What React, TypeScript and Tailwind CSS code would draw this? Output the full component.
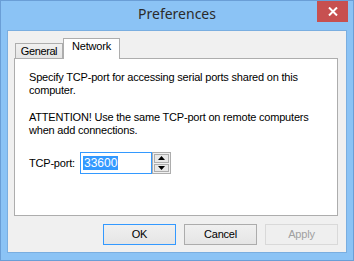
import React from 'react';

const body = { fontFamily: '"Liberation Sans", Arial, sans-serif' };

function Spinner() {
  return (
    <div className="flex flex-col gap-[1px] w-[19px] h-[22px] border border-[#adadad] bg-[#f0f0f0] p-[1px]">
      <div className="flex-1 flex items-center justify-center border border-[#adadad] bg-[#e8e8e8]">
        <svg width="7" height="4" viewBox="0 0 7 4"><path d="M0 4 L3.5 0 L7 4 Z" fill="#000" /></svg>
      </div>
      <div className="flex-1 flex items-center justify-center border border-[#adadad] bg-[#e8e8e8]">
        <svg width="7" height="4" viewBox="0 0 7 4"><path d="M0 0 L7 0 L3.5 4 Z" fill="#000" /></svg>
      </div>
    </div>
  );
}

export default function App() {
  return (
    <div className="w-[354px] h-[261px] flex flex-col border border-[#6a9ed6] bg-[#8bc3f5]" style={body}>
      {/* Title bar */}
      <div className="h-[29px] flex items-start justify-center relative">
        <span className="mt-[4px] text-[14px] leading-[18px] text-[#2b2b2b]" style={{ fontFamily: '"Noto Sans", "Open Sans", sans-serif' }}>Preferences</span>
        <button className="absolute right-[5px] top-0 w-[31px] h-[21px] bg-[#c75050] flex items-center justify-center">
          <svg width="10" height="9" viewBox="0 0 10 9"><path d="M1 0.5 L9 8.5 M9 0.5 L1 8.5" stroke="#fff" strokeWidth="2" /></svg>
        </button>
      </div>

      {/* Client area */}
      <div className="mx-[6px] h-[223px] border border-[#7aaee0] bg-[#f0f0f0] flex flex-col pt-[7px] pl-[6px] pr-[8px] pb-[7px] text-[11px] tracking-[-0.2px] text-black">
        {/* Tabs */}
        <div className="h-[20px] flex items-end pl-[1px]">
          <div className="h-[15px] w-[48px] border border-b-0 border-[#adadad] bg-gradient-to-b from-[#f0f0f0] to-[#e5e5e5] flex items-center justify-center pt-[1px] leading-none tracking-[-0.4px]">
            General
          </div>
          <div className="relative z-10 -mb-px h-[21px] w-[57px] border border-b-0 border-[#adadad] bg-white flex items-start justify-center pt-[2px] leading-none">
            Network
          </div>
        </div>

        {/* Panel */}
        <div className="h-[158px] border border-[#adadad] bg-white pl-[14px] pt-[12px] leading-[13px]">
          <p>Specify TCP-port for accessing serial ports shared on this<br />computer.</p>
          <p className="mt-[14px]">ATTENTION! Use the same TCP-port on remote computers<br />when add connections.</p>
          <div className="mt-[15px] flex items-center">
            <span className="w-[51px]">TCP-port:</span>
            <div className="flex">
              <div className="w-[72px] h-[22px] border border-[#3399ff] bg-white flex items-center pl-[2px]">
                <span className="bg-[#3399ff] text-white text-[12px] leading-[14px] px-px tracking-normal">33600</span>
              </div>
              <Spinner />
            </div>
          </div>
        </div>

        {/* Buttons */}
        <div className="mt-[8px] flex justify-end gap-[8px]">
          <button className="w-[73px] h-[21px] border border-[#3399ff] bg-gradient-to-b from-[#f0f0f0] to-[#e5e5e5] text-[11px]">OK</button>
          <button className="w-[73px] h-[21px] border border-[#acacac] bg-gradient-to-b from-[#f0f0f0] to-[#e5e5e5] text-[11px]">Cancel</button>
          <button className="w-[73px] h-[21px] border border-[#d9d9d9] bg-[#efefef] text-[11px] text-[#a0a0a0]">Apply</button>
        </div>
      </div>
    </div>
  );
}
